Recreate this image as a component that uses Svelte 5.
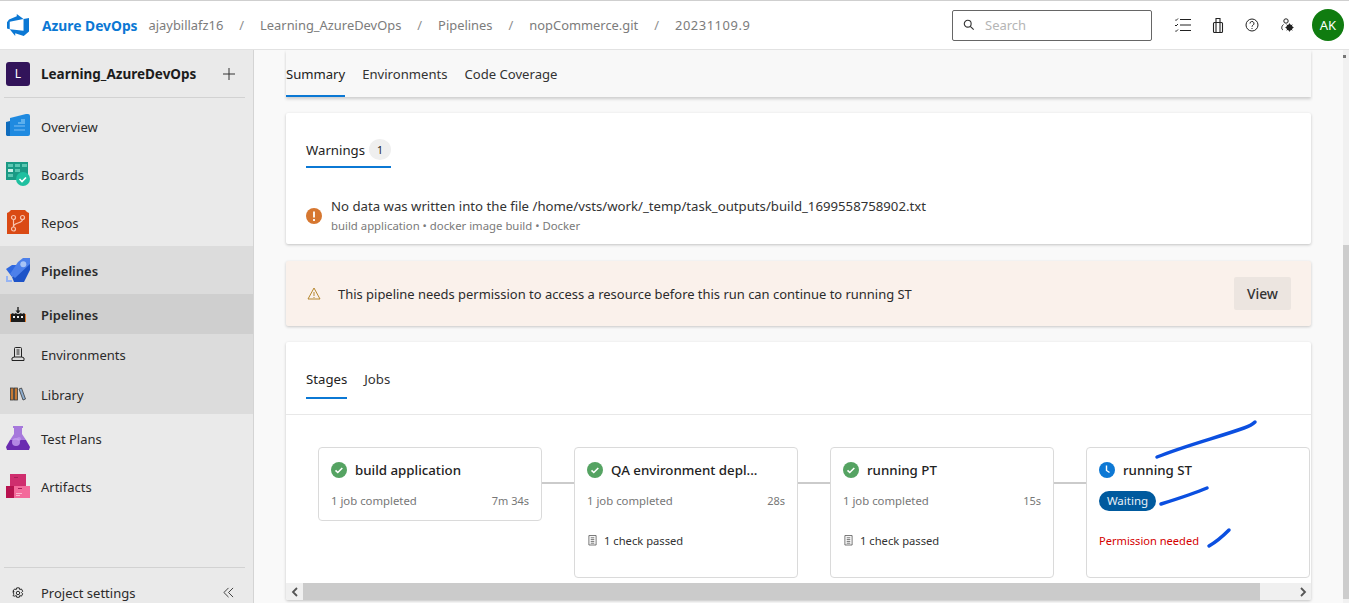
<script>
  const stages = [
    { name: 'build application', time: '7m 34s', h: 74 },
    { name: 'QA environment depl...', time: '28s', h: 131, check: true },
    { name: 'running PT', time: '15s', h: 131, check: true }
  ];
</script>

<div class="page">
  <header class="top">
    <svg class="logo" viewBox="0 0 24 24" width="22" height="22"><path fill="#0b78d4" d="M0 8.877L2.247 5.910l8.405-3.416V.022l7.370 5.393L2.966 8.338v8.225L0 15.707zm24-4.450v14.651l-5.753 4.900-9.303-3.057v3.056l-5.978-7.416 15.057 1.798V5.415z"/></svg>
    <span class="brand">Azure DevOps</span>
    <nav class="crumbs">
      <span>ajaybillafz16</span><i>/</i><span>Learning_AzureDevOps</span><i>/</i><span>Pipelines</span><i>/</i><span>nopCommerce.git</span><i>/</i><span class="run">20231109.9</span>
    </nav>
    <div class="search">
      <svg viewBox="0 0 14 14" width="12" height="12"><circle cx="5.500" cy="5.500" r="4" fill="none" stroke="#333" stroke-width="1.300"/><path d="M8.500 8.500l4 4" stroke="#333" stroke-width="1.300"/></svg>
      <span>Search</span>
    </div>
    <div class="tools">
      <svg viewBox="0 0 16 14" width="16" height="14" fill="none" stroke="#222" stroke-width="1"><path d="M0 1.500l1 1 2-2M0 7l1 1 2-2M0 12.500l1 1 2-2M5 1.500h11M5 7h11M5 12.500h11"/></svg>
      <svg viewBox="0 0 12 15" width="12" height="15" fill="none" stroke="#222" stroke-width="1.100"><rect x="1.500" y="4.500" width="9" height="10" rx="1"/><path d="M4 4.500V.5h4v4M4 4.500v10M8 4.500v10"/></svg>
      <svg viewBox="0 0 14 14" width="14" height="14" fill="none" stroke="#222" stroke-width="1"><circle cx="7" cy="7" r="6"/><path d="M5 5.500a2 2 0 1 1 3 1.700c-.7.400-1 .8-1 1.500M7 10v1"/></svg>
      <svg viewBox="0 0 14 14" width="14" height="14" fill="none" stroke="#222" stroke-width="1"><circle cx="6" cy="3" r="2.200"/><path d="M3.500 6.500C1.500 8 1 11 3 12"/><circle cx="9.500" cy="9.500" r="2.800" fill="#222"/><path d="M9.500 5.500v8M5.500 9.500h8M6.700 6.700l5.600 5.600M12.300 6.700l-5.600 5.600"/></svg>
    </div>
    <div class="avatar">AK</div>
  </header>

  <div class="body">
    <aside class="side">
      <div class="project">
        <span class="plogo">L</span>
        <b>Learning_AzureDevOps</b>
        <svg viewBox="0 0 12 12" width="12" height="12"><path d="M6 0v12M0 6h12" stroke="#333" stroke-width="1"/></svg>
      </div>
      <div class="rule"></div>
      <ul class="nav">
        <li class="main">
          <svg viewBox="0 0 24 24" width="24" height="24"><path fill="#0f6cbd" d="M0 8l4-1v15l-3 0-1-1z"/><path fill="#1f8ae0" d="M4 4l16-4h2a2 2 0 0 1 2 2v18a2 2 0 0 1-2 2H4z"/><path fill="#6cb8f0" d="M12 8h3V5h4v5h-7z" opacity=".8"/><path fill="#70b5ee" d="M8 11h11v2H8zM8 15h11v2H8z" opacity=".6"/></svg>
          <span>Overview</span>
        </li>
        <li class="main">
          <svg viewBox="0 0 24 24" width="24" height="24"><path fill="#1b9a85" d="M0 0h22v18H0z"/><path fill="#5cc7b2" d="M2 2h5v3H2zM9 2h5v3H9zM16 2h5v3h-5zM9 7h5v3H9z"/><path fill="#cdf0e8" d="M2 7h5v3H2z"/><path fill="#5cc7b2" d="M2 12h5v3H2z"/><circle cx="17" cy="17" r="7" fill="#1fc0a0"/><path d="M13.500 17l2.500 2.500 4-4" fill="none" stroke="#fff" stroke-width="1.600"/></svg>
          <span>Boards</span>
        </li>
        <li class="main">
          <svg viewBox="0 0 24 24" width="24" height="24"><path fill="#da4a14" d="M3 2l2-2h14l2 2 2 1v21H1V3z"/><g fill="none" stroke="#f7c3ae" stroke-width="1.200"><circle cx="7.500" cy="7.500" r="2"/><circle cx="16.500" cy="7.500" r="2"/><circle cx="7.500" cy="19" r="2"/><path d="M7.500 9.500v7.500M16.500 9.500c0 4-9 3-9 7"/></g></svg>
          <span>Repos</span>
        </li>
        <li class="main group">
          <svg viewBox="0 0 24 24" width="24" height="24"><path fill="#96b4f4" d="M0 18h2v4h4v2H0z"/><path fill="#2f68e0" d="M0 11l6-4h8l-8 12z"/><path fill="#1d53c8" d="M24 4v8l-6 12H8l-2-5z"/><path fill="#4d80ea" d="M12 4l5-4h7v6L9 20l-5-4z"/><circle cx="17.300" cy="6.300" r="3" fill="#a8c3f5"/></svg>
          <b>Pipelines</b>
        </li>
        <li class="sub current">
          <svg viewBox="0 0 16 15" width="16" height="15"><path fill="#e0782a" d="M0 7h1v8H0zM15 7h1v8h-1z"/><path fill="#1c1c1c" d="M1 7l2-1 1 1 2-1 1 1h2l2-1 1 1 2-1 1 1v8H1z"/><path d="M8 0v6" stroke="#222" stroke-width="1.400"/><path fill="#222" d="M5.500 3.500h5L8 6.500z"/><path fill="#eee" d="M3 9h2v2H3zM7 9h2v2H7zM11 9h2v2h-2z"/></svg>
          <b>Pipelines</b>
        </li>
        <li class="sub">
          <svg viewBox="0 0 14 14" width="16" height="14" fill="none" stroke="#222" stroke-width="1"><path d="M3.500 10V1.500a1 1 0 0 1 1-1h5a1 1 0 0 1 1 1V10M1 13.500V11l2-1h8l2 1v2.500zM5.500 3h3M5.500 5h3M5.500 7h3"/></svg>
          <span>Environments</span>
        </li>
        <li class="sub">
          <svg viewBox="0 0 16 14" width="16" height="14" fill="#c77a35" stroke="#3a3a3a" stroke-width=".8"><rect x=".5" y="1" width="3" height="12"/><rect x="4.500" y="1" width="3" height="12"/><path d="M9 2l2.500-1 4 11-2.500 1z" fill="#8faed0"/></svg>
          <span>Library</span>
        </li>
        <li class="main">
          <svg viewBox="0 0 24 24" width="24" height="24"><path fill="#a678dc" d="M7 0h10v2h-1v6l4 6H4l4-6V2H7z"/><path fill="#6a2bb0" d="M4 14h16l4 7-1 3H1l-1-3z"/><circle cx="10" cy="16" r="4" fill="#c49ef0" opacity=".8"/><circle cx="13" cy="13" r="2" fill="#c49ef0" opacity=".6"/></svg>
          <span>Test Plans</span>
        </li>
        <li class="main">
          <svg viewBox="0 0 24 24" width="24" height="24"><path fill="#cf2e6e" d="M4 0h16v12H4z"/><path fill="#b8124f" d="M0 12h10v12H0z"/><path fill="#f36a9b" d="M8 12h16v12H8z"/><path fill="#a81e58" d="M8 3h4v1H8zM2 14h4v1H2zM12 14h4v1h-4z"/><path fill="#fbb7cf" d="M10 19h6v1h-6zM10 21h4v1h-4z"/></svg>
          <span>Artifacts</span>
        </li>
      </ul>
      <div class="foot">
        <div class="rule"></div>
        <div class="settings">
          <svg viewBox="0 0 14 14" width="12" height="12" fill="none" stroke="#222" stroke-width="1.100"><circle cx="7" cy="7" r="2"/><path d="M5.500 1h3l.5 2 2-.7 1.500 2.700-1.500 1.500 1.500 1.500-1.500 2.700-2-.7-.5 2h-3l-.5-2-2 .7L1 10l1.500-1.500L1 7l1.500-1.500L1 5l2-2.700 2 .7z"/></svg>
          <span>Project settings</span>
          <svg class="collapse" viewBox="0 0 12 12" width="11" height="11" fill="none" stroke="#333" stroke-width="1"><path d="M6 1L1 6l5 5M11 1L6 6l5 5"/></svg>
        </div>
      </div>
    </aside>

    <main class="content">
      <div class="column">
        <div class="tabs-bar">
          <span class="tab on">Summary</span>
          <span class="tab">Environments</span>
          <span class="tab">Code Coverage</span>
        </div>

        <section class="card warnings">
          <div class="wtab"><span>Warnings</span><em>1</em></div>
          <div class="issue">
            <svg viewBox="0 0 16 16" width="16" height="16"><circle cx="8" cy="8" r="8" fill="#d67730"/><path d="M8 3.500v6M8 11v2" stroke="#fff" stroke-width="1.800"/></svg>
            <div>
              <p>No data was written into the file /home/vsts/work/_temp/task_outputs/build_1699558758902.txt</p>
              <small>build application • docker image build • Docker</small>
            </div>
          </div>
        </section>

        <section class="banner">
          <svg viewBox="0 0 14 13" width="14" height="13" fill="none" stroke="#b5862c" stroke-width="1"><path d="M7 1l6 11H1zM7 5v4M7 10v1"/></svg>
          <span>This pipeline needs permission to access a resource before this run can continue to running ST</span>
          <button>View</button>
        </section>

        <section class="card stages">
          <div class="stabs">
            <span class="stab on">Stages</span>
            <span class="stab">Jobs</span>
          </div>
          <div class="flow">
            {#each stages as s, i}
              <article class="stage" style="height: {s.h}px">
                <div class="title">
                  <svg viewBox="0 0 16 16" width="16" height="16"><circle cx="8" cy="8" r="8" fill="#55a362"/><path d="M4.500 8.300l2.300 2.200 4.500-4.500" fill="none" stroke="#fff" stroke-width="1.600"/></svg>
                  <b>{s.name}</b>
                </div>
                <div class="meta"><span>1 job completed</span><span>{s.time}</span></div>
                {#if s.check}
                  <div class="check">
                    <svg viewBox="0 0 10 12" width="9" height="11" fill="none" stroke="#555" stroke-width=".9"><path d="M1 .5h8v10.500H1zM3 3h4M3 5h4M3 7h4M3 9h4"/></svg>
                    <span>1 check passed</span>
                  </div>
                {/if}
              </article>
              <div class="link"></div>
            {/each}
            <article class="stage tall">
              <div class="title">
                <svg viewBox="0 0 16 16" width="16" height="16"><circle cx="8" cy="8" r="8" fill="#0d78d4"/><path d="M7.500 3.500v5l3 2" fill="none" stroke="#fff" stroke-width="1.400"/></svg>
                <b>running ST</b>
              </div>
              <span class="pill">Waiting</span>
              <span class="perm">Permission needed</span>
            </article>
          </div>
          <div class="hscroll">
            <span class="arrow"><svg viewBox="0 0 8 10" width="8" height="10"><path d="M6 1L2 5l4 4" fill="none" stroke="#555" stroke-width="1.800"/></svg></span>
            <span class="thumb"></span>
            <span class="arrow"><svg viewBox="0 0 8 10" width="8" height="10"><path d="M2 1l4 4-4 4" fill="none" stroke="#555" stroke-width="1.800"/></svg></span>
          </div>
        </section>
      </div>
      <div class="vscroll"><span class="varrow"></span><span class="vthumb"></span></div>

      <svg class="ink" viewBox="0 0 1349 603" width="1349" height="603" fill="none" stroke="#0b4fe0" stroke-width="3.500" stroke-linecap="round">
        <path d="M1156 457c30-12 62-20 87-29 6-2 9-4 11-6"/>
        <path d="M1160 504c16-5 32-10 46-16"/>
        <path d="M1208 546c7-4 14-10 20-16"/>
      </svg>
    </main>
  </div>
</div>

<style>
  :global(body) { margin: 0; overflow: hidden; }
  .page { width: 1349px; height: 603px; overflow: hidden; font-family: "Noto Sans", "Open Sans", sans-serif; font-size: 13px; color: #222; display: flex; flex-direction: column; background: #f9f9f9; }
  svg { flex: none; display: block; }

  .top { height: 48px; flex: none; background: #fff; border-top: 1px solid #cfcfcf; border-bottom: 1px solid #e2e2e2; display: flex; align-items: center; padding: 0 5px 0 7px; }
  .brand { margin-left: 13px; font-weight: 700; color: #0b78d4; font-size: 13.800px; }
  .crumbs { margin-left: 11px; display: flex; gap: 16px; color: #7c7c7c; font-size: 12.900px; flex: 1; }
  .crumbs i { font-style: normal; color: #8e8e8e; }
  .crumbs .run { letter-spacing: .55px; }
  .search { width: 188px; height: 29px; border: 1px solid #666; border-radius: 2px; display: flex; align-items: center; gap: 10px; padding-left: 10px; color: #b5b5b5; font-size: 13px; }
  .tools { display: flex; align-items: center; margin-left: 23px; gap: 21px; }
  .avatar { margin-left: 18px; width: 32px; height: 32px; border-radius: 50%; background: #107c10; color: #fff; display: flex; align-items: center; justify-content: center; font-size: 13px; }

  .body { flex: 1; display: flex; min-height: 0; }
  .side { width: 253px; flex: none; background: #eaeaea; border-right: 1px solid #d4d4d4; display: flex; flex-direction: column; }
  .project { display: flex; align-items: center; height: 47px; padding: 0 18px 0 6px; }
  .project b { margin-left: 11px; flex: 1; font-size: 13.500px; color: #1c1c1c; }
  .plogo { width: 24px; height: 24px; border-radius: 3px; background: #32145a; color: #fff; font-size: 12px; display: flex; align-items: center; justify-content: center; }
  .rule { height: 1px; background: #d2d2d2; margin: 0 8px 0 4px; }
  .nav { list-style: none; margin: 0; padding: 4px 0 0; }
  .nav li { display: flex; align-items: center; color: #2b2b2b; font-size: 13px; }
  .nav li span, .nav li b { padding-top: 2px; }
  .nav b { font-weight: 600; }
  .main { height: 48px; padding-left: 6px; gap: 11px; }
  .group { background: #dcdcdc; }
  .sub { height: 40px; background: #dcdcdc; padding-left: 10px; gap: 15px; }
  .current { background: #cfcfcf; }
  .foot { margin-top: auto; }
  .settings { height: 35px; box-sizing: border-box; display: flex; align-items: flex-start; padding: 16px 19px 0 12px; gap: 17px; font-size: 13px; line-height: 18px; color: #2b2b2b; }
  .settings svg { margin-top: 3px; }
  .collapse { margin-left: auto; }

  .content { flex: 1; display: flex; justify-content: space-between; min-width: 0; position: relative; background: #f9f9f9; }
  .column { width: 1025px; margin-left: 32px; }
  .tabs-bar { height: 47px; background: #f8f8f8; display: flex; gap: 17px; box-shadow: 0 2px 3px rgba(0,0,0,.18); clip-path: inset(0 -2px -8px -2px); font-size: 13.100px; }
  .tab { height: 47px; box-sizing: border-box; padding-top: 2px; border-bottom: 2px solid transparent; display: flex; align-items: center; color: #333; }
  .tab.on { border-bottom-color: #0b78d4; color: #222; }

  .card { background: #fff; border-radius: 2px; box-shadow: 0 1px 3px rgba(0,0,0,.22); }
  .warnings { margin-top: 16px; height: 131px; padding: 20px 20px 0; box-sizing: border-box; }
  .wtab { display: inline-flex; align-items: center; gap: 4px; height: 35px; border-bottom: 2px solid #0b78d4; box-sizing: border-box; font-size: 13.200px; color: #222; }
  .wtab em { font-style: normal; font-size: 10.500px; width: 22px; height: 21px; border-radius: 50%; background: #efefef; display: flex; align-items: center; justify-content: center; }
  .issue { display: flex; align-items: center; gap: 9px; margin-top: 29px; }
  .issue p { margin: 0; font-size: 13.200px; line-height: 19px; color: #333; }
  .issue small { display: block; font-size: 11.350px; line-height: 19px; color: #7a7a7a; }

  .banner { margin-top: 17px; height: 65px; background: #faf1eb; border-radius: 2px; box-shadow: 0 1px 3px rgba(0,0,0,.2); display: flex; align-items: center; padding: 0 20px 0 21px; gap: 17px; font-size: 12.950px; color: #2b2b2b; }
  .banner span { flex: 1; padding-top: 1px; }
  .banner button { width: 57px; height: 33px; border: 0; border-radius: 2px; background: #ece5e0; font: 500 13.800px "Noto Sans", sans-serif; color: #333; padding: 0; }

  .stages { margin-top: 16px; height: 258px; position: relative; overflow: hidden; }
  .stabs { height: 72px; border-bottom: 1px solid #e8e8e8; padding: 0 20px; display: flex; gap: 17px; }
  .stab { height: 36px; margin-top: 19px; display: flex; align-items: center; font-size: 13.200px; color: #333; }
  .stab.on { border-bottom: 2px solid #0b78d4; color: #222; }
  .flow { display: flex; align-items: flex-start; padding: 32px 0 0 32px; width: 1060px; }
  .stage { width: 224px; flex: none; box-sizing: border-box; border: 1px solid #dadada; border-radius: 4px; padding: 13px 12px 0; background: #fff; }
  .tall { height: 131px; }
  .title { display: flex; align-items: center; gap: 8px; height: 18px; }
  .title b { font-weight: 500; font-size: 13.300px; color: #222; white-space: nowrap; }
  .meta { display: flex; justify-content: space-between; margin-top: 14px; font-size: 11.350px; color: #777; line-height: 16px; }
  .meta span:last-child { font-size: 11px; }
  .check { display: flex; align-items: center; gap: 7px; margin-top: 24px; font-size: 11.200px; color: #333; padding-left: 1px; }
  .link { width: 32px; height: 2px; background: #cbcbcb; margin-top: 35px; flex: none; }
  .pill { display: inline-block; margin-top: 12px; height: 20px; width: 57px; border-radius: 10px; background: #005a9e; color: #e8f1f8; font-size: 11.500px; line-height: 20px; text-align: center; }
  .perm { display: block; margin-top: 22px; color: #d40000; font-size: 11.100px; line-height: 16px; }
  .hscroll { position: absolute; left: 0; right: 0; bottom: 0; height: 17px; background: #f0f0f0; display: flex; align-items: center; }
  .arrow { width: 17px; height: 17px; display: flex; align-items: center; justify-content: center; flex: none; }
  .thumb { flex: 1; height: 17px; background: #cbcbcb; margin-right: 34px; }

  .vscroll { width: 6px; position: absolute; right: 0; top: 0; bottom: 0; background: #f1f1f1; }
  .varrow { display: block; width: 3px; height: 3px; margin: 5px 0 0; background: #777; }
  .vthumb { display: block; margin-top: 187px; height: 354px; background: #cdcdcd; }
  .ink { position: absolute; left: -253px; top: -50px; pointer-events: none; }
</style>
